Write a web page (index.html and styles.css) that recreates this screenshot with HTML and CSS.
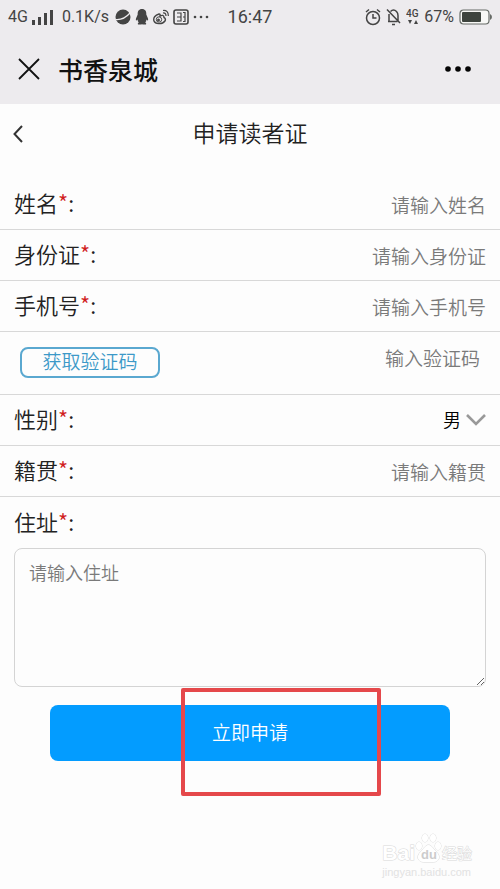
FILE: index.html
```html
<!DOCTYPE html>
<html lang="zh-CN">
<head>
<meta charset="utf-8">
<meta name="viewport" content="width=device-width, initial-scale=1">
<title>申请读者证</title>
<link rel="stylesheet" href="styles.css">
</head>
<body>
<header class="top">
  <div class="status">
    <div class="status-side">
      <span>4G</span>
      <svg width="22" height="16" viewBox="0 0 22 16" fill="#444"><path d="M0 11h3v5H0zM6 8h3v8H6zM12 4h3v12h-3zM18 1h3v15h-3z"/></svg>
      <span class="speed">0.1K/s</span>
      <svg width="16" height="16" viewBox="0 0 16 16"><circle cx="8" cy="8" r="7.500" fill="#444"/><path d="M1 10.500Q9 11 15 4" fill="none" stroke="#edebee" stroke-width="1.200"/></svg>
      <svg width="14" height="16" viewBox="0 0 14 16" fill="#444"><path d="M7 0C3.800 0 2.500 2.300 2.700 5.500L1 9.500q-.5 2.500.5 2l1-1q.3 2 1.200 3-1.500.8-.7 2h3.500l.5-.5.5.5H11q.8-1.200-.7-2 .9-1 1.200-3l1 1q1 .5.5-2l-1.700-4C11.500 2.300 10.200 0 7 0z"/></svg>
      <svg width="16" height="16" viewBox="0 0 16 16" fill="none" stroke="#444"><path d="M6 5C2 6 0 9 1 12c1 3 8 4 11 0 1-2 0-3-1-3.500C11 6 9 6 7 7c0-1 .5-2-1-2z" stroke-width="1.400"/><circle cx="6" cy="10.500" r="2.700"/><circle cx="5.500" cy="11" r="1" fill="#444"/><path d="M10 4q3-.5 3 3M10 1.500Q15.500 1 15.300 7" stroke-width="1.200"/></svg>
      <svg width="16" height="16" viewBox="0 0 16 16" fill="none" stroke="#444"><rect x="1" y="1" width="14" height="14" rx="2" stroke-width="1.600"/><path d="M4 4h4v8H4M4 8h4M10 3.500h2v9h-2M10 8h2" stroke-width="1.200"/></svg>
      <svg width="16" height="16" viewBox="0 0 16 16" fill="#444"><circle cx="2" cy="8" r="1.300"/><circle cx="8" cy="8" r="1.300"/><circle cx="14" cy="8" r="1.300"/></svg>
    </div>
    <span class="clock">16:47</span>
    <div class="status-side status-right">
      <svg width="16" height="18" viewBox="0 0 16 18" fill="none" stroke="#444" stroke-width="1.500"><circle cx="8" cy="10" r="6.500"/><path d="M8 6v4h3.500M1 4l3-2.500M15 4l-3-2.500"/></svg>
      <svg width="15" height="18" viewBox="0 0 15 18" fill="none" stroke="#444" stroke-width="1.500"><path d="M4.500 3.500q3-3 6 0 1.500 1.500 1.500 4v6M2 13.500h9.500M3 13.500V6M6 16.500h3M1 1.500l13 13.500"/></svg>
      <svg width="13" height="18" viewBox="0 0 13 18"><text class="net" x="0" y="9">4G</text><path d="M2 12h4l-2 4zM8 16h4l-2-4z" fill="#444"/></svg>
      <span>67%</span>
      <svg width="33" height="16" viewBox="0 0 33 16"><rect x="1" y="1" width="29" height="14" rx="3.500" fill="#f8f8f6" stroke="#666b66" stroke-width="1.200"/><rect x="3" y="3" width="19" height="10" rx="1" fill="#3e443e"/><path d="M31 5q2 1 2 3t-2 3z" fill="#666b66"/></svg>
    </div>
  </div>
  <div class="nav">
    <button class="icon-btn" type="button" aria-label="关闭"><svg width="22" height="22" viewBox="0 0 22 22" fill="none" stroke="#111" stroke-width="1.800"><path d="M1 1l20 20M21 1L1 21"/></svg></button>
    <strong class="site">书香泉城</strong>
    <button class="icon-btn more" type="button" aria-label="更多"><svg width="28" height="8" viewBox="0 0 28 8" fill="#050505"><circle cx="4" cy="4" r="2.800"/><circle cx="14" cy="4" r="2.800"/><circle cx="24" cy="4" r="2.800"/></svg></button>
  </div>
</header>
<main>
  <div class="title-bar">
    <a class="back" href="#" aria-label="返回"><svg width="10" height="18" viewBox="0 0 10 18" fill="none" stroke="#333" stroke-width="2"><path d="M9 1L1.500 9 9 17"/></svg></a>
    <h1>申请读者证</h1>
  </div>
  <form>
    <div class="row"><label for="name">姓名<i>*</i>:</label><input id="name" type="text" placeholder="请输入姓名"></div>
    <div class="row"><label for="idno">身份证<i>*</i>:</label><input id="idno" type="text" placeholder="请输入身份证"></div>
    <div class="row"><label for="phone">手机号<i>*</i>:</label><input id="phone" type="tel" placeholder="请输入手机号"></div>
    <div class="row code-row"><button class="code-btn" type="button">获取验证码</button><input type="text" aria-label="验证码" placeholder="输入验证码"></div>
    <div class="row"><label for="sex">性别<i>*</i>:</label>
      <div class="select"><select id="sex"><option>男</option><option>女</option></select><svg width="20" height="12" viewBox="0 0 20 12" fill="none" stroke="#999" stroke-width="2.600"><path d="M1 1l9 9 9-9"/></svg></div></div>
    <div class="row"><label for="origin">籍贯<i>*</i>:</label><input id="origin" type="text" placeholder="请输入籍贯"></div>
    <div class="row last"><label for="address">住址<i>*</i>:</label></div>
    <div class="address"><textarea id="address" placeholder="请输入住址"></textarea></div>
    <div class="actions"><button class="submit" type="submit">立即申请</button><span class="highlight"></span></div>
  </form>
</main>
<div class="watermark">
  <div class="brand"><span class="latin">Bai</span><svg width="27" height="32" viewBox="0 0 27 32" fill="#fff" stroke="#d8d8d8"><ellipse cx="4" cy="13" rx="3" ry="4"/><ellipse cx="10" cy="5" rx="3" ry="4"/><ellipse cx="18" cy="5" rx="3" ry="4"/><ellipse cx="23" cy="13" rx="3" ry="4"/><path d="M13.500 12c-3 0-5 4-8 7-5 5-2 10 3 10h10c5 0 8-5 3-10-3-3-5-7-8-7z"/><text class="du" x="6" y="26">du</text></svg><span>经验</span></div>
  <div class="url">jingyan.baidu.com</div>
</div>
</body>
</html>
```
FILE: styles.css
```css
* { box-sizing: border-box; }

body {
  position: relative;
  min-height: 100vh;
  margin: 0;
  background: #fdfdfd;
  color: #222;
  font-family: "Noto Sans CJK SC", sans-serif;
  font-weight: 350;
}

button, input, select, textarea {
  margin: 0;
  padding: 0;
  border: 0;
  background: none;
  font: inherit;
}

svg { display: block; flex: none; }

.top { background: #edebee; }

.status {
  display: grid;
  grid-template-columns: 1fr auto 1fr;
  align-items: center;
  height: 34px;
  padding: 0 8px;
  color: #444;
  font: 400 16px/20px Roboto, sans-serif;
}

.status-side { display: flex; align-items: center; gap: 4px; }
.status-right { gap: 5px; justify-content: flex-end; }
.speed { margin: 0 2px 0 4px; }
.clock { font-size: 18px; }
.net { font: 500 10px Roboto, sans-serif; fill: #444; }

.nav {
  display: flex;
  align-items: center;
  height: 70px;
  padding: 0 28px 0 18px;
}

.site { margin-left: 18px; color: #111; font-size: 25px; line-height: 36px; font-weight: 500; }
.more { margin-left: auto; }

.title-bar {
  display: grid;
  grid-template-columns: 40px 1fr 40px;
  align-items: center;
  height: 60px;
  margin-bottom: 15px;
}

.back { padding-left: 13px; }

h1 {
  margin: 0;
  padding-bottom: 4px;
  font-size: 23px;
  line-height: 32px;
  font-weight: inherit;
  text-align: center;
}

.row {
  display: flex;
  align-items: center;
  height: 51px;
  padding: 0 14px;
  border-bottom: 1px solid #d8d8d8;
}

.row label { flex: none; padding-bottom: 4px; font-size: 22px; line-height: 32px; }
.row i { color: #d01c1c; font-style: normal; }

.row input {
  flex: 1;
  min-width: 0;
  padding-top: 2px;
  font-size: 19px;
  line-height: 28px;
  text-align: right;
}

::placeholder { color: #7a7a7a; opacity: 1; }

.row.code-row {
  align-items: flex-start;
  height: 63px;
  padding: 15px 20px 0;
}

.row.code-row input { padding: 0; height: 22px; }

.code-btn {
  width: 140px;
  height: 31px;
  padding-bottom: 4px;
  border: 2px solid #5aa8d0;
  border-radius: 8px;
  color: #3c99c8;
  font-size: 19px;
  line-height: 24px;
}

.select { display: flex; align-items: center; gap: 5px; margin-left: auto; }
.select select { padding-bottom: 2px; appearance: none; color: #000; font-size: 18px; line-height: 28px; }
.row.last { border-bottom: 0; }

.address { padding: 0 14px; }

textarea {
  display: block;
  width: 100%;
  height: 139px;
  padding: 9px 14px;
  border: 1px solid #d4d4d4;
  border-radius: 8px;
  font-size: 18px;
  line-height: 28px;
}

.actions { position: relative; padding: 18px 50px 0; }

.submit {
  display: block;
  width: 100%;
  height: 56px;
  padding-bottom: 4px;
  border-radius: 8px;
  background: #039cff;
  color: #fff;
  font-size: 19px;
}

.highlight {
  position: absolute;
  top: 1px;
  left: calc(50% - 69px);
  width: 200px;
  height: 108px;
  border: 4px solid #e5484b;
  border-radius: 2px;
  pointer-events: none;
}

.watermark {
  position: absolute;
  right: 28px;
  bottom: 10px;
  color: #fff;
  -webkit-text-stroke: 1px #d8d8d8;
  paint-order: stroke fill;
}

.brand { display: flex; align-items: flex-end; font-size: 15px; line-height: 24px; }
.latin { font: 700 21px/24px "Liberation Sans", sans-serif; }
.du { font: 700 13px "Liberation Sans", sans-serif; fill: #ccc; stroke: none; -webkit-text-stroke: 0; }
.url { color: #e2e2e2; font: 400 11px/14px "Liberation Sans", sans-serif; -webkit-text-stroke: 0; }
```
